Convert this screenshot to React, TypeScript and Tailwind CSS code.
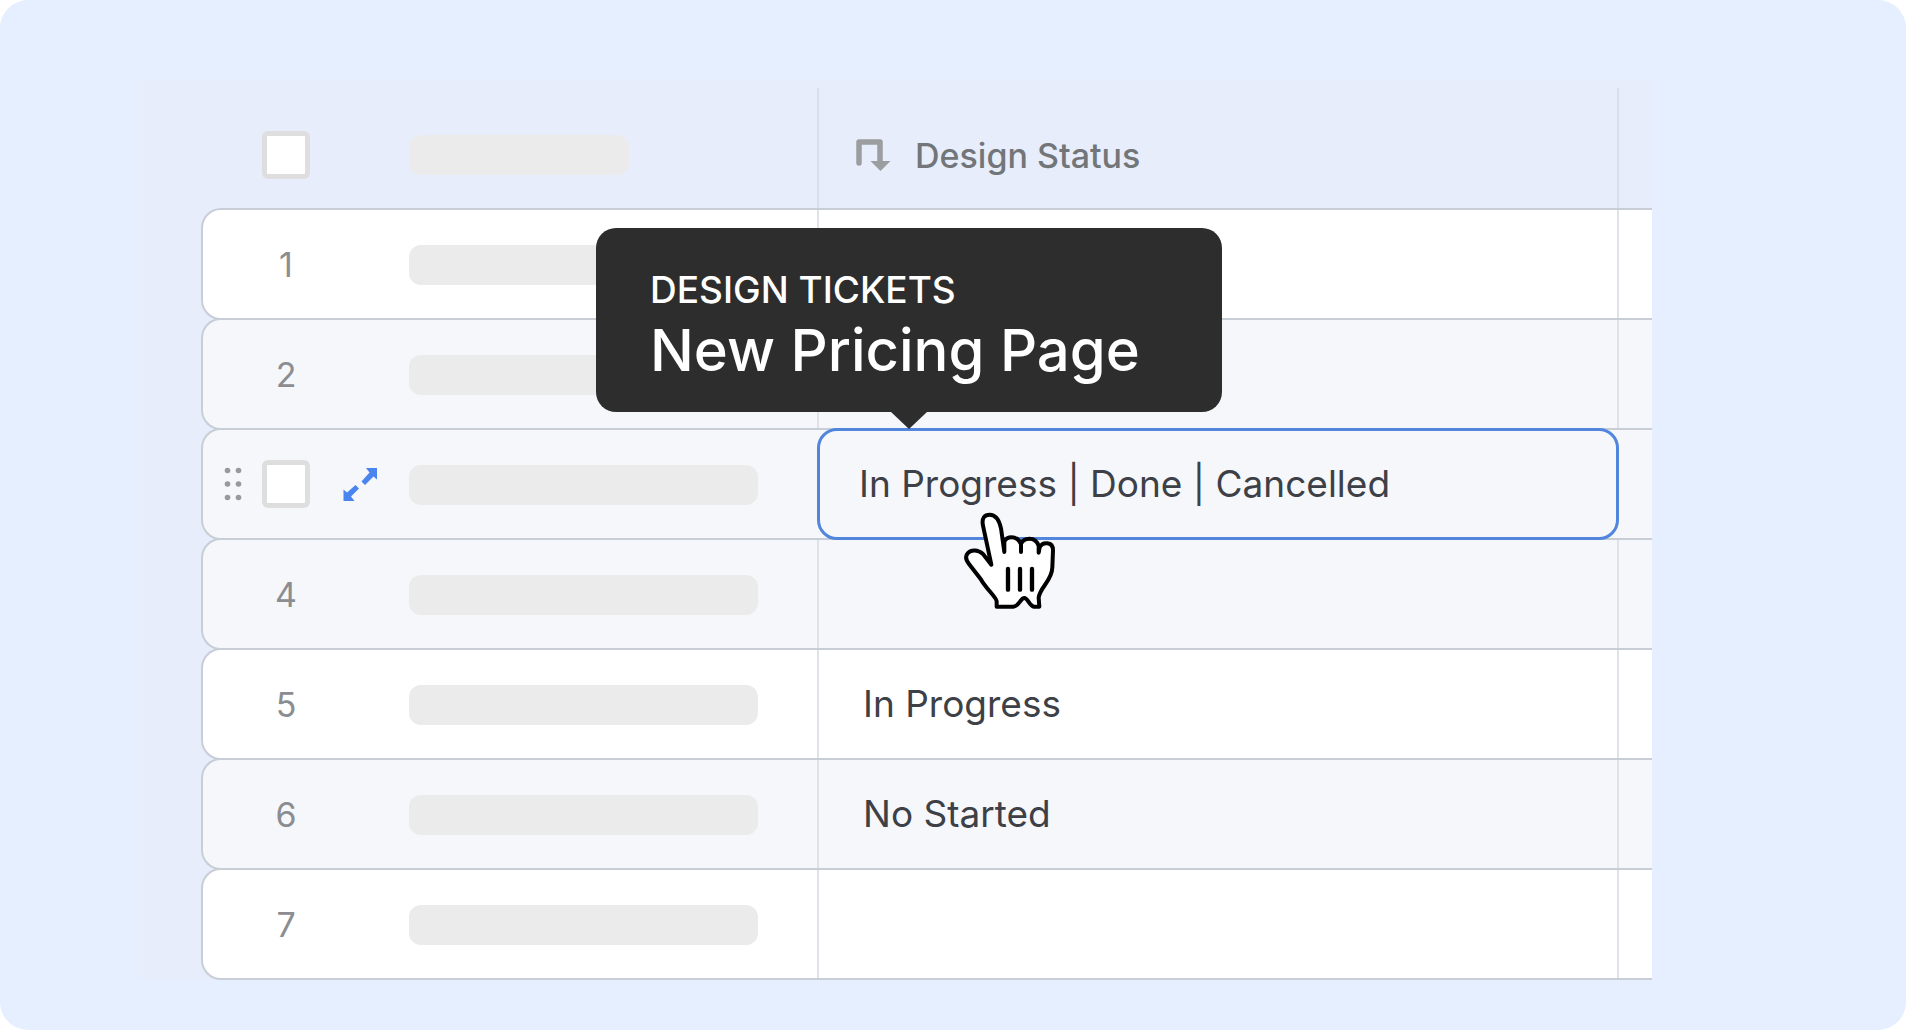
import React from "react";

type Row = { id: number; status: string; tinted: boolean };

const rows: Row[] = [
  { id: 1, status: "", tinted: false },
  { id: 2, status: "", tinted: true },
  { id: 3, status: "In Progress | Done | Cancelled", tinted: true },
  { id: 4, status: "", tinted: true },
  { id: 5, status: "In Progress", tinted: false },
  { id: 6, status: "No Started", tinted: true },
  { id: 7, status: "", tinted: false },
];

const HOVERED_ROW = 3;

function Checkbox({ label }: { label: string }) {
  return (
    <input
      type="checkbox"
      aria-label={label}
      className="block size-12 appearance-none rounded-md border-[5px] border-[#dedede] bg-white checked:bg-[#4a84ee]"
    />
  );
}

function LookupIcon() {
  return (
    <svg width="36" height="34" viewBox="0 0 36 34" fill="none" aria-hidden="true">
      <path d="M4 25V4H25V24" stroke="#9c9d9f" strokeWidth="5.5" strokeLinecap="round" strokeLinejoin="round" />
      <path d="M15.5 23H35.5L25.5 33Z" fill="#9c9d9f" />
    </svg>
  );
}

function DragHandle() {
  return (
    <svg width="18" height="34" viewBox="0 0 18 34" fill="#97999e" aria-hidden="true">
      {[3.5, 17, 30.5].map((y) => (
        <React.Fragment key={y}>
          <circle cx="3.5" cy={y} r="2.8" />
          <circle cx="14.5" cy={y} r="2.8" />
        </React.Fragment>
      ))}
    </svg>
  );
}

function ExpandIcon() {
  return (
    <svg width="34" height="34" viewBox="0 0 34 34" fill="#4a84ee" aria-hidden="true">
      <path d="M23 1H34V12.5L30.5 9.5L22 18L18.5 14.5L26.5 5.5Z" />
      <path d="M11.5 34H0.5V22.5L4 25.5L12.5 18L16 21.5L8 29.5Z" />
    </svg>
  );
}

function HandPointer() {
  return (
    <svg
      width="120"
      height="120"
      viewBox="0 0 360 360"
      aria-hidden="true"
      className="pointer-events-none absolute top-[69px] left-[133px]"
    >
      <path
        d="M124 197L99 80C94 56 105 47 119 47C136 47 147 60 153 88L163 159V128C168 118 176 115 185 115C198 115 208 124 213 136V159V134C218 123 227 119 238 119C253 119 262 128 266 141V161L269 145C273 137 282 132 292 133C303 134 309 142 309 154L307 205C306 246 270 264 266 296L268 323H252C238 321 234 297 223 297C211 297 208 322 190 323H140V307C138 293 110 272 92 240L57 195C46 181 46 170 54 162C64 151 84 152 99 165Z"
        fill="white"
        stroke="black"
        strokeWidth="12"
        strokeLinejoin="round"
      />
      <path d="M174 210V272M210 210V272M246 210V272" stroke="black" strokeWidth="13" strokeLinecap="round" />
    </svg>
  );
}

function Tooltip() {
  return (
    <div
      role="tooltip"
      className="absolute bottom-[126px] left-[-221px] h-[184px] w-[626px] rounded-[20px] bg-[#2d2d2d] px-[54px] pt-10 text-white"
    >
      <p className="text-[37px] leading-[44px] font-medium uppercase">Design tickets</p>
      <p className="mt-1 text-[58px] leading-[68px] font-medium whitespace-nowrap">New Pricing Page</p>
      <svg
        width="36"
        height="17"
        viewBox="0 0 36 17"
        aria-hidden="true"
        className="absolute top-full left-1/2 -translate-x-1/2"
      >
        <path d="M0 0H36L18 17Z" fill="#2d2d2d" />
      </svg>
    </div>
  );
}

function TableRow({ row }: { row: Row }) {
  const hovered = row.id === HOVERED_ROW;
  return (
    <tr
      className={`relative -mt-0.5 grid grid-cols-[206px_408px_1fr_35px] rounded-l-[20px] border-2 border-r-0 border-[#c8ced6] ${
        row.tinted ? "bg-[#f5f7fb]" : "bg-white"
      } ${hovered ? "z-10" : ""}`}
    >
      <td className="grid h-[108px] grid-cols-[59px_48px_99px] items-center justify-items-center text-[34px] text-[#8b8d90]">
        {hovered ? (
          <>
            <button type="button" aria-label="Drag row" className="cursor-grab">
              <DragHandle />
            </button>
            <Checkbox label="Select row 3" />
            <button type="button" aria-label="Expand row" className="cursor-pointer">
              <ExpandIcon />
            </button>
          </>
        ) : (
          <span className="col-start-2">{row.id}</span>
        )}
      </td>
      <td className="flex items-center pt-0.5">
        <div className="h-10 w-[349px] rounded-xl bg-[#ebebeb]" />
      </td>
      {hovered ? (
        <td className="relative flex items-center pl-[42px] text-[37px] whitespace-nowrap text-[#3d4046]">
          <div className="absolute -inset-y-0.5 -right-0.5 left-0 rounded-[20px] border-[3px] border-[#5285dc]" />
          {row.status}
          <Tooltip />
          <HandPointer />
        </td>
      ) : (
        <td className="flex items-center border-l-2 border-[#dfe3e8] pl-11 text-[37px] whitespace-nowrap text-[#3d4046]">
          {row.status}
        </td>
      )}
      <td className={hovered ? "" : "border-l-2 border-[#dfe3e8]"} />
    </tr>
  );
}

export default function App() {
  return (
    <div className="bg-white">
      <main className="min-h-screen rounded-[28px] bg-[#e5efff] pt-[79px] pr-[254px] pb-12 pl-[137px] font-['Inter',sans-serif]">
        <div className="bg-[#e7edfb]">
          <table className="block">
            <thead className="block">
              <tr className="grid grid-cols-[206px_408px_1fr_35px] pt-[9px] pl-[66px]">
                <th scope="col" className="grid h-[122px] grid-cols-[59px_48px_99px] items-center pt-3">
                  <span className="col-start-2">
                    <Checkbox label="Select all rows" />
                  </span>
                </th>
                <th scope="col" className="flex items-center pt-3">
                  <div className="h-10 w-[220px] rounded-xl bg-[#ebebeb]" />
                </th>
                <th
                  scope="col"
                  className="flex items-center gap-6 border-l-2 border-[#d7dfeb] pt-3 pl-9 text-[34px] font-medium whitespace-nowrap text-[#727679]"
                >
                  <LookupIcon />
                  Design Status
                </th>
                <td className="border-l-2 border-[#d7dfeb]" />
              </tr>
            </thead>
            <tbody className="ml-16 block">
              {rows.map((row) => (
                <TableRow key={row.id} row={row} />
              ))}
            </tbody>
          </table>
        </div>
      </main>
    </div>
  );
}
